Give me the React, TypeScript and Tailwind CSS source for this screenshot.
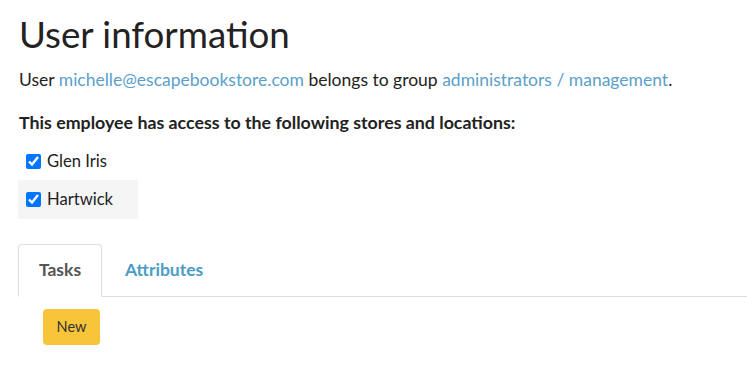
import React from "react";

export default function App() {
  return (
    <div className="min-h-[370px] bg-white pl-[19px] pt-[12px] text-[#222]" style={{ fontFamily: "Lato, 'Open Sans', sans-serif" }}>
      <h1 className="text-[36.7px] leading-[44px] font-normal text-[#222]">User information</h1>
      <p className="mt-[12px] text-[17.5px] leading-[24px]">
        User <a className="text-[#5b9fc9]">michelle@escapebookstore.com</a> belongs to group{" "}
        <a className="text-[#5b9fc9]">administrators / management</a>.
      </p>
      <p className="mt-[19px] text-[17.8px] leading-[22px] font-bold">
        This employee has access to the following stores and locations:
      </p>
      <div className="mt-[9px] flex flex-col">
        <label className="flex h-[38px] w-[120px] -ml-px items-center gap-[6px] pl-[8px] text-[16.6px]">
          <input type="checkbox" defaultChecked className="m-0 h-[15px] w-[15px]" />
          Glen Iris
        </label>
        <label className="flex h-[39px] w-[120px] -ml-px items-center gap-[6px] bg-[#f5f5f5] pl-[8px] text-[16.6px]">
          <input type="checkbox" defaultChecked className="m-0 h-[15px] w-[15px]" />
          Hartwick
        </label>
      </div>
      <div className="mt-[25px] -ml-px flex border-b border-[#dddddd]">
        <div className="-mb-px flex h-[53px] w-[84px] items-center justify-center rounded-t-[4px] border border-b-white border-[#dddddd] bg-white text-[17.5px] font-bold text-[#555]">
          Tasks
        </div>
        <div className="flex h-[52px] items-center px-[23px] text-[17.5px] font-bold text-[#4a9cc7]">
          Attributes
        </div>
      </div>
      <div className="pl-[24px] pt-[12px]">
        <button className="h-[36px] w-[57px] rounded-[4px] bg-[#f8c43a] text-[14.5px] text-[#333]">New</button>
      </div>
    </div>
  );
}
